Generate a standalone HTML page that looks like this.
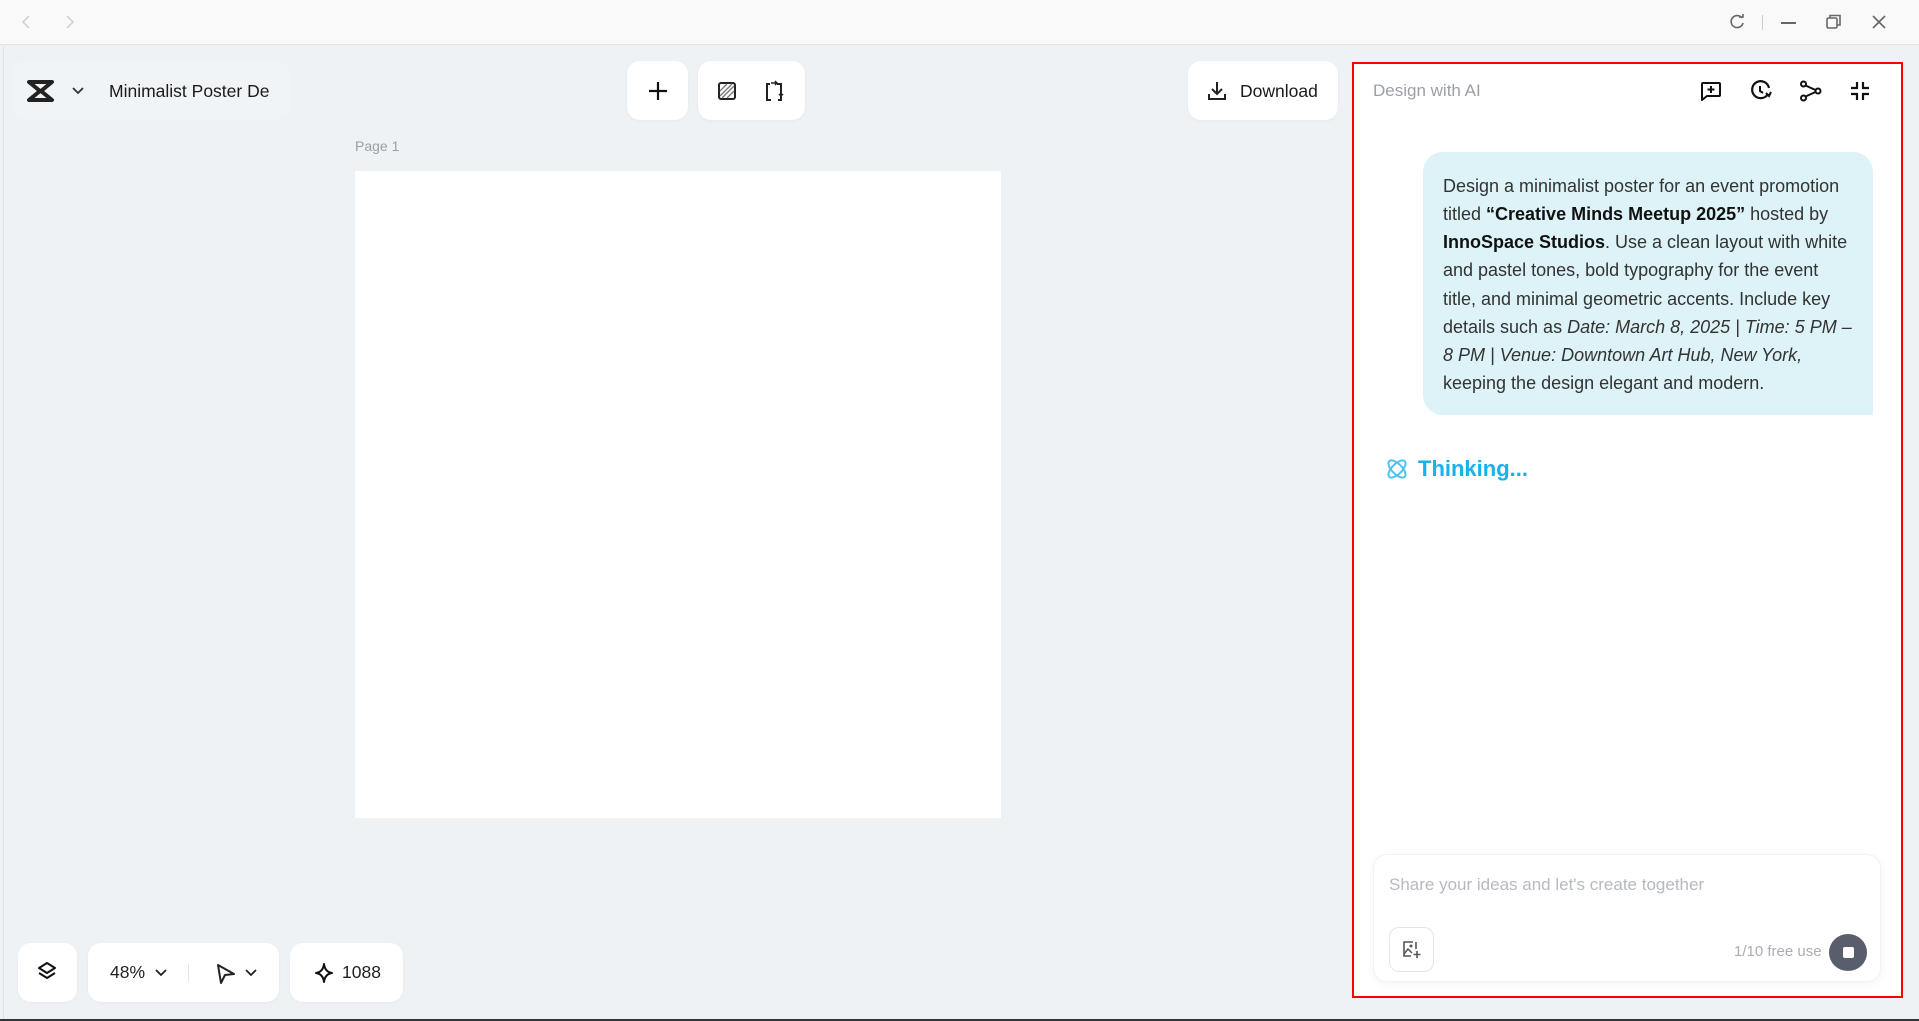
<!DOCTYPE html>
<html><head><meta charset="utf-8"><style>
*{margin:0;padding:0;box-sizing:border-box}
body{width:1919px;height:1021px;overflow:hidden;background:#eef2f5;font-family:"Liberation Sans",sans-serif;position:relative;color:#222}
.abs{position:absolute}
.btn{position:absolute;background:#fff;border-radius:13px;box-shadow:0 1px 3px rgba(0,0,0,.04)}
svg{position:absolute;overflow:visible}
</style></head><body>
<div class="abs" style="left:0;top:0;width:1919px;height:45px;background:#f9f9f9;border-bottom:1px solid #e4e4e4"></div>
<svg style="left:20px;top:15px" width="12" height="14"><path d="M9 1 L3 7 L9 13" fill="none" stroke="#cfcfcf" stroke-width="1.5"/></svg>
<svg style="left:64px;top:15px" width="12" height="14"><path d="M3 1 L9 7 L3 13" fill="none" stroke="#cfcfcf" stroke-width="1.5"/></svg>
<svg style="left:1729px;top:14px" width="16" height="16"><path d="M13 4 A6 6 0 1 0 14 9" fill="none" stroke="#666" stroke-width="1.6"/><path d="M10 3 L14 3 L14 0" fill="none" stroke="#666" stroke-width="1.6"/></svg>
<div class="abs" style="left:1762px;top:15px;width:1px;height:15px;background:#ccc"></div>
<div class="abs" style="left:1781px;top:22px;width:15px;height:2px;background:#666"></div>
<svg style="left:1826px;top:14px" width="16" height="16"><rect x="1" y="4" width="10" height="10" rx="1.5" fill="none" stroke="#666" stroke-width="1.6"/><path d="M4 4 V1.5 H14 V11 H11" fill="none" stroke="#666" stroke-width="1.6"/></svg>
<svg style="left:1872px;top:15px" width="14" height="14"><path d="M1 1 L13 13 M13 1 L1 13" stroke="#666" stroke-width="1.6"/></svg>
<div class="abs" style="left:3px;top:46px;width:1px;height:975px;background:#dde1e5"></div>

<div class="abs" style="left:12px;top:61px;width:279px;height:59px;border-radius:14px;background:#f1f4f7"></div>
<svg style="left:27px;top:80px" width="28" height="22"><path d="M2 2 H25 L14 11 L25 20 H2 L13 11 Z" fill="none" stroke="#222" stroke-width="4" stroke-linejoin="round"/></svg>
<svg style="left:72px;top:87px" width="12" height="8"><path d="M1 1 L6 6 L11 1" fill="none" stroke="#333" stroke-width="1.8"/></svg>
<div class="abs" style="left:109px;top:81px;font-size:17.5px;font-weight:500;color:#1a1a1a">Minimalist Poster De</div>

<div class="btn" style="left:627px;top:61px;width:61px;height:59px"></div>
<svg style="left:648px;top:81px" width="20" height="20"><path d="M10 1 V19 M1 10 H19" stroke="#111" stroke-width="2.2"/></svg>
<div class="btn" style="left:698px;top:61px;width:107px;height:59px"></div>
<svg style="left:718px;top:82px" width="18" height="18"><rect x="1" y="1" width="16" height="16" rx="2" fill="none" stroke="#222" stroke-width="2"/><path d="M2 9 L9 2 M2 14 L14 2 M4 16 L16 4 M9 16 L16 9" stroke="#777" stroke-width="1.3"/></svg>
<svg style="left:764px;top:81px" width="20" height="21"><path d="M6 3 H3 V19 H7 M14 19 H17 V3 H13" fill="none" stroke="#222" stroke-width="2"/><path d="M7 2 H13 M11 0 L13 2 L11 4 M17 7 V15 M15 13 L17 15 L19 13" fill="none" stroke="#222" stroke-width="1.5"/></svg>

<div class="btn" style="left:1188px;top:61px;width:150px;height:59px"></div>
<svg style="left:1207px;top:81px" width="20" height="20"><path d="M10 1 V13 M5 8 L10 13 L15 8 M2 13 V18 H18 V13" fill="none" stroke="#222" stroke-width="2"/></svg>
<div class="abs" style="left:1240px;top:81px;font-size:17.5px;color:#1a1a1a">Download</div>

<div class="abs" style="left:355px;top:138px;font-size:14px;color:#9aa0a6">Page 1</div>
<div class="abs" style="left:355px;top:171px;width:646px;height:647px;background:#fff"></div>

<div class="abs" style="left:1352px;top:62px;width:551px;height:936px;background:#fff;border:2.5px solid #f00"></div>
<div class="abs" style="left:1373px;top:81px;font-size:17px;color:#9ba0a8">Design with AI</div>
<svg style="left:1700px;top:81px" width="22" height="20"><path d="M3 2 H19 Q20 2 20 3 V14 Q20 15 19 15 H7 L2 19 V3 Q2 2 3 2 Z" fill="none" stroke="#111" stroke-width="2" stroke-linejoin="round"/><path d="M11 5 V12 M7.5 8.5 H14.5" stroke="#111" stroke-width="2"/></svg>
<svg style="left:1750px;top:80px" width="22" height="22"><path d="M18 14 A8.5 8.5 0 1 1 19 8" fill="none" stroke="#111" stroke-width="2.2"/><path d="M10 6 V11 L13 13" fill="none" stroke="#111" stroke-width="2"/><path d="M16 13 L19 16 L21 12" fill="none" stroke="#111" stroke-width="2"/></svg>
<svg style="left:1800px;top:81px" width="22" height="20"><circle cx="3.5" cy="3" r="2.5" fill="none" stroke="#111" stroke-width="2"/><circle cx="3.5" cy="17" r="2.5" fill="none" stroke="#111" stroke-width="2"/><circle cx="18" cy="10" r="2.5" fill="none" stroke="#111" stroke-width="2"/><path d="M5.5 4.5 L15.5 9 M5.5 15.5 L15.5 11" stroke="#111" stroke-width="2"/></svg>
<svg style="left:1850px;top:81px" width="20" height="20"><path d="M7 1 V7 H1 M13 1 V7 H19 M1 13 H7 V19 M19 13 H13 V19" fill="none" stroke="#111" stroke-width="2.2"/></svg>

<div class="abs" style="left:1423px;top:152px;width:450px;height:263px;background:#ddf3f7;border-radius:20px 20px 0 20px;padding:20px 0 0 20px;font-size:18px;line-height:28.15px;color:#333"><div style="width:412px">Design a minimalist poster for an event promotion titled <b style="color:#111">“Creative Minds Meetup 2025”</b> hosted by <b style="color:#111">InnoSpace Studios</b>. Use a clean layout with white and pastel tones, bold typography for the event title, and minimal geometric accents. Include key details such as <i>Date: March 8, 2025 | Time: 5 PM – 8 PM | Venue: Downtown Art Hub, New York,</i> keeping the design elegant and modern.</div></div>

<svg style="left:1385px;top:457px" width="24" height="24"><ellipse cx="12" cy="12" rx="11" ry="5" transform="rotate(45 12 12)" fill="none" stroke="#4cc3f0" stroke-width="2"/><ellipse cx="12" cy="12" rx="11" ry="5" transform="rotate(-45 12 12)" fill="none" stroke="#4cc3f0" stroke-width="2"/></svg>
<div class="abs" style="left:1418px;top:456px;font-size:22px;font-weight:bold;color:#16b2ec">Thinking...</div>

<div class="abs" style="left:1373px;top:854px;width:508px;height:128px;border-radius:14px;background:#fff;border:1px solid #f0f2f4;box-shadow:0 2px 8px rgba(0,0,0,.05)"></div>
<div class="abs" style="left:1389px;top:875px;font-size:17px;color:#b5bac2">Share your ideas and let's create together</div>
<div class="abs" style="left:1389px;top:927px;width:45px;height:45px;border:1px solid #e3e5e8;border-radius:10px"></div>
<svg style="left:1402px;top:940px" width="20" height="20"><path d="M11 2 H2 V16 H9" fill="none" stroke="#555" stroke-width="1.6"/><path d="M14 2 V9" stroke="#555" stroke-width="1.6"/><path d="M2 14 L6 9 L10 13" fill="none" stroke="#555" stroke-width="1.5"/><circle cx="9" cy="6" r="1.5" fill="#555"/><path d="M15 11 V18 M11.5 14.5 H18.5" stroke="#555" stroke-width="1.6"/></svg>
<div class="abs" style="left:1734px;top:943px;font-size:15px;color:#a9adb4">1/10 free use</div>
<div class="abs" style="left:1829px;top:934px;width:38px;height:37px;border-radius:50%;background:#595e6c"></div>
<div class="abs" style="left:1843px;top:947px;width:11px;height:11px;border-radius:2px;background:#fff"></div>

<div class="btn" style="left:18px;top:943px;width:59px;height:59px"></div>
<svg style="left:37px;top:962px" width="20" height="21"><path d="M10 1 L18 6 L10 11 L2 6 Z" fill="none" stroke="#111" stroke-width="2" stroke-linejoin="round"/><path d="M2 11 L10 16 L18 11" fill="none" stroke="#111" stroke-width="2" stroke-linejoin="round"/></svg>
<div class="btn" style="left:88px;top:943px;width:191px;height:59px"></div>
<div class="abs" style="left:110px;top:962px;font-size:17.5px;color:#222">48%</div>
<svg style="left:155px;top:969px" width="12" height="8"><path d="M1 1 L6 6 L11 1" fill="none" stroke="#222" stroke-width="1.8"/></svg>
<div class="abs" style="left:188px;top:964px;width:1px;height:18px;background:#e3e5e8"></div>
<svg style="left:216px;top:963px" width="20" height="22"><path d="M2 2 L18 11 L9 12 L5 20 Z" fill="none" stroke="#222" stroke-width="2" stroke-linejoin="round"/></svg>
<svg style="left:245px;top:969px" width="12" height="8"><path d="M1 1 L6 6 L11 1" fill="none" stroke="#222" stroke-width="1.8"/></svg>
<div class="btn" style="left:290px;top:943px;width:113px;height:59px"></div>
<svg style="left:315px;top:963px" width="18" height="20"><path d="M9 1 Q10 9 17 10 Q10 11 9 19 Q8 11 1 10 Q8 9 9 1 Z" fill="none" stroke="#111" stroke-width="2" stroke-linejoin="round"/></svg>
<div class="abs" style="left:342px;top:962px;font-size:17.5px;color:#222">1088</div>
<div class="abs" style="left:0;top:1019px;width:1919px;height:2px;background:#333"></div>
</body></html>
